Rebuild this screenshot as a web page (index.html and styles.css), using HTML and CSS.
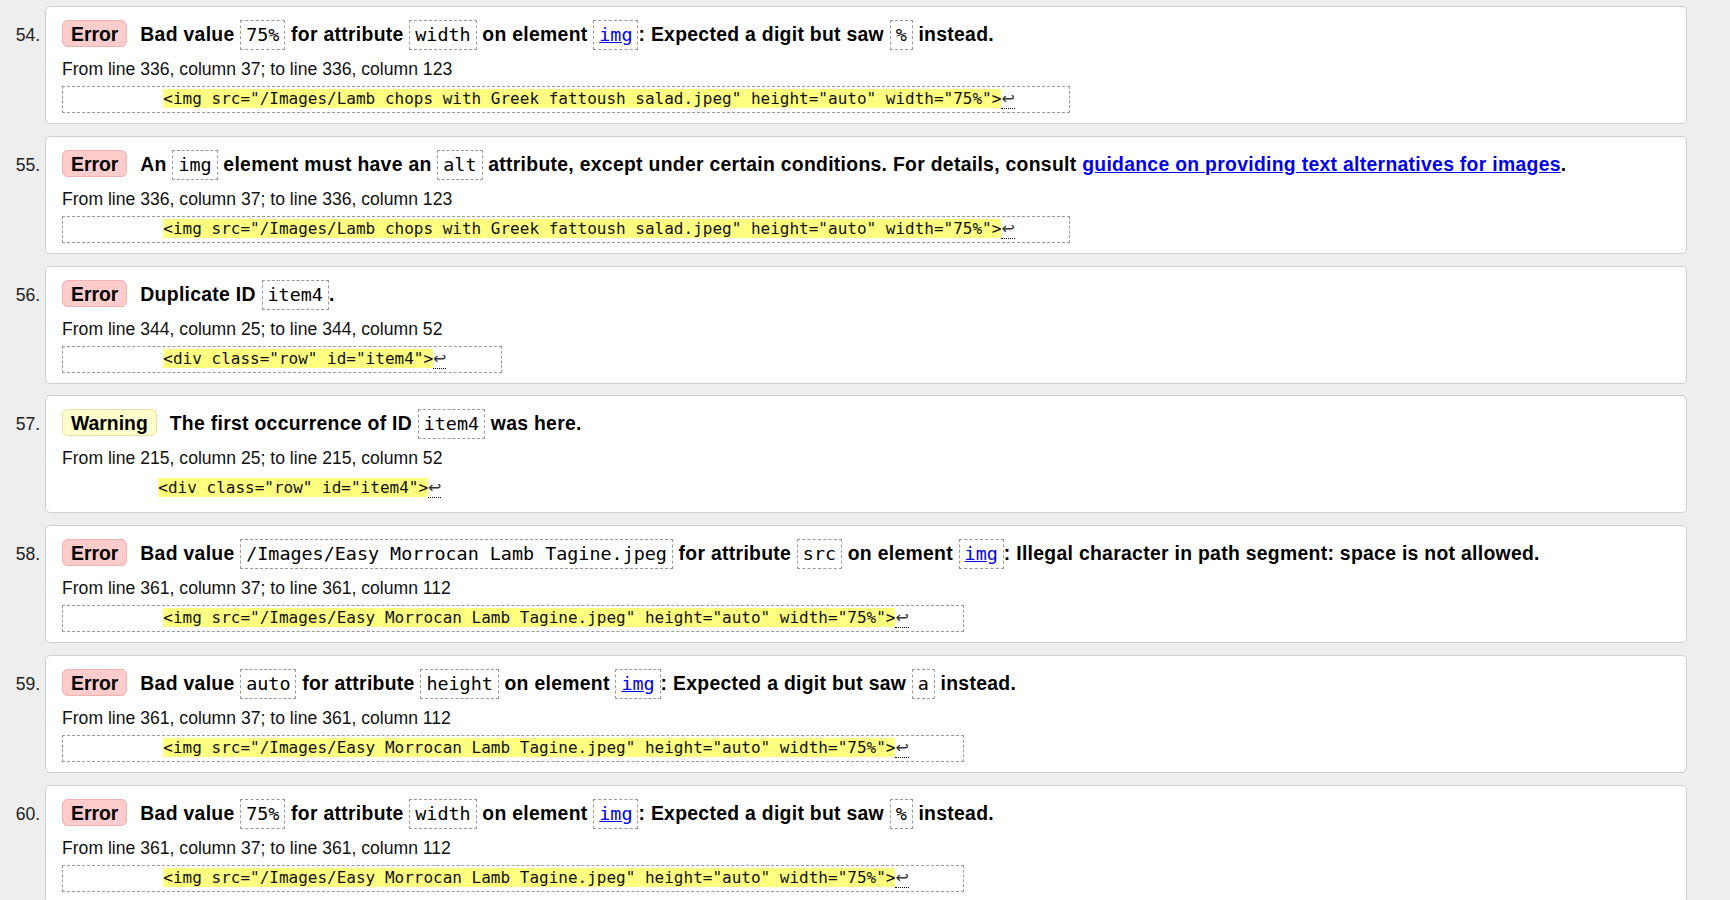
FILE: index.html
```html
<!DOCTYPE html>
<html lang="en">
<head>
<meta charset="utf-8">
<title>Validation results</title>
<link rel="stylesheet" href="styles.css">
</head>
<body>
<ol class="results" start="54">
  <li class="msg">
    <p class="head"><strong class="badge error">Error</strong>Bad value <code class="c">75%</code> for attribute <code class="c">width</code> on element <code class="c"><a href="#">img</a></code>: Expected a digit but saw <code class="c">%</code> instead.</p>
    <p class="loc">From line 336, column 37; to line 336, column 123</p>
    <div class="extract"><code class="ex">          <mark>&lt;img src="/Images/Lamb chops with Greek fattoush salad.jpeg" height="auto" width="75%"&gt;</mark><span class="lf">↩</span>     </code></div>
  </li>
  <li class="msg">
    <p class="head"><strong class="badge error">Error</strong>An <code class="c">img</code> element must have an <code class="c">alt</code> attribute, except under certain conditions. For details, consult <a href="#">guidance on providing text alternatives for images</a>.</p>
    <p class="loc">From line 336, column 37; to line 336, column 123</p>
    <div class="extract"><code class="ex">          <mark>&lt;img src="/Images/Lamb chops with Greek fattoush salad.jpeg" height="auto" width="75%"&gt;</mark><span class="lf">↩</span>     </code></div>
  </li>
  <li class="msg">
    <p class="head"><strong class="badge error">Error</strong>Duplicate ID <code class="c">item4</code>.</p>
    <p class="loc">From line 344, column 25; to line 344, column 52</p>
    <div class="extract"><code class="ex">          <mark>&lt;div class="row" id="item4"&gt;</mark><span class="lf">↩</span>     </code></div>
  </li>
  <li class="msg">
    <p class="head"><strong class="badge warning">Warning</strong>The first occurrence of ID <code class="c">item4</code> was here.</p>
    <p class="loc">From line 215, column 25; to line 215, column 52</p>
    <div class="extract"><code class="ex plain">          <mark>&lt;div class="row" id="item4"&gt;</mark><span class="lf">↩</span>     </code></div>
  </li>
  <li class="msg">
    <p class="head"><strong class="badge error">Error</strong>Bad value <code class="c">/Images/Easy Morrocan Lamb Tagine.jpeg</code> for attribute <code class="c">src</code> on element <code class="c"><a href="#">img</a></code>: Illegal character in path segment: space is not allowed.</p>
    <p class="loc">From line 361, column 37; to line 361, column 112</p>
    <div class="extract"><code class="ex">          <mark>&lt;img src="/Images/Easy Morrocan Lamb Tagine.jpeg" height="auto" width="75%"&gt;</mark><span class="lf">↩</span>     </code></div>
  </li>
  <li class="msg">
    <p class="head"><strong class="badge error">Error</strong>Bad value <code class="c">auto</code> for attribute <code class="c">height</code> on element <code class="c"><a href="#">img</a></code>: Expected a digit but saw <code class="c">a</code> instead.</p>
    <p class="loc">From line 361, column 37; to line 361, column 112</p>
    <div class="extract"><code class="ex">          <mark>&lt;img src="/Images/Easy Morrocan Lamb Tagine.jpeg" height="auto" width="75%"&gt;</mark><span class="lf">↩</span>     </code></div>
  </li>
  <li class="msg">
    <p class="head"><strong class="badge error">Error</strong>Bad value <code class="c">75%</code> for attribute <code class="c">width</code> on element <code class="c"><a href="#">img</a></code>: Expected a digit but saw <code class="c">%</code> instead.</p>
    <p class="loc">From line 361, column 37; to line 361, column 112</p>
    <div class="extract"><code class="ex">          <mark>&lt;img src="/Images/Easy Morrocan Lamb Tagine.jpeg" height="auto" width="75%"&gt;</mark><span class="lf">↩</span>     </code></div>
  </li>
</ol>
</body>
</html>
```
FILE: styles.css
```css
* {
  box-sizing: border-box;
}

html,
body {
  margin: 0;
  padding: 0;
  background: #eeeeee;
}

body {
  font-family: "Liberation Sans", Arial, sans-serif;
  font-size: 17.6px;
  color: #111111;
}

.results {
  list-style: decimal outside;
  margin: 0;
  padding: 6px 43px 0 45px;
}

.msg {
  background: #ffffff;
  border: 1px solid #cfcfcf;
  border-radius: 5px;
  padding: 11px 16px 10px;
  margin-bottom: 11.75px;
}

.msg::marker {
  color: #222222;
  font-size: 17.6px;
}

.head {
  margin: 0;
  font-size: 19.36px;
  font-weight: bold;
  line-height: 32px;
  letter-spacing: 0.3px;
  color: #000000;
  white-space: nowrap;
}

.badge {
  padding: 2px 8px 1px;
  border: 1px solid;
  border-radius: 6px;
  margin-right: 13px;
  letter-spacing: 0;
}

.badge.error {
  background: #ffcccc;
  border-color: #eeb4b4;
}

.badge.warning {
  background: #ffffcc;
  border-color: #e2e2aa;
}

.head a {
  color: #0000ee;
}

.c {
  display: inline-block;
  font-family: "DejaVu Sans Mono", "Liberation Mono", monospace;
  font-size: 18.4px;
  font-weight: normal;
  line-height: 28px;
  letter-spacing: 0;
  border: 1px dashed #9a9a9a;
  padding: 0 5px;
  white-space: pre;
  color: #000000;
}

.c a {
  color: #0000ee;
}

.loc {
  margin: 6px 0 0;
  line-height: 26px;
  color: #111111;
}

.extract {
  display: flex;
  margin-top: 4px;
}

.ex {
  font-family: "DejaVu Sans Mono", "Liberation Mono", monospace;
  font-size: 16px;
  line-height: 23px;
  white-space: pre;
  border: 1px dashed #9a9a9a;
  padding: 0 6px 2px 4px;
  color: #111111;
}

.ex.plain {
  border-color: transparent;
  padding-left: 0;
  margin-left: -1px;
}

.ex mark {
  background: #ffff80;
  color: #111111;
}

.lf {
  font-family: "DejaVu Sans", sans-serif;
  border-bottom: 1px dotted #000000;
  color: #333333;
}
```
